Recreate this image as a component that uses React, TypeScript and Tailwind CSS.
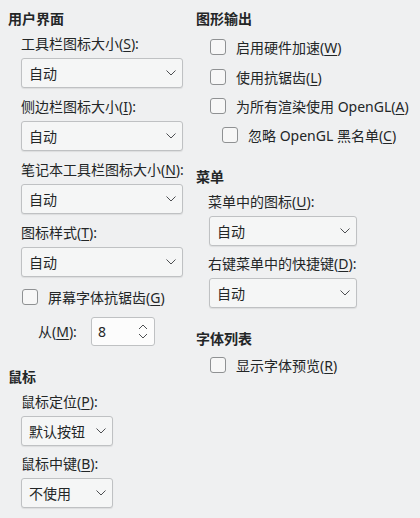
import React from "react";

const Chevron = () => (
  <svg width="10" height="6" viewBox="0 0 10 6" className="shrink-0">
    <path d="M0.5 0.5 L5 5 L9.5 0.5" fill="none" stroke="#4d4f52" strokeWidth="1" />
  </svg>
);

const M = ({ c }: { c: string }) => <span className="underline underline-offset-2">{c}</span>;

const Label = ({ text, m, className = "" }: { text: string; m: string; className?: string }) => (
  <div className={`h-[20px] flex items-center leading-[20px] ${className}`}>
    {text}(<M c={m} />):
  </div>
);

const Combo = ({ value, w, className = "" }: { value: string; w: string; className?: string }) => (
  <div
    className={`h-[30px] ${w} flex items-center justify-between pl-[7px] pr-[6px] rounded-[3px] border border-[#bfc1c3] bg-[#f5f6f6] shadow-[0_1px_1px_rgba(0,0,0,0.08)] ${className}`}
  >
    <span>{value}</span>
    <Chevron />
  </div>
);

const Check = ({ text, m, className = "" }: { text: string; m: string; className?: string }) => (
  <div className={`h-[20px] flex items-center ${className}`}>
    <div className="w-[16px] h-[16px] rounded-[3px] border border-[#8f9193] bg-[#f7f7f7] shrink-0" />
    <span className="ml-[10px]">
      {text}(<M c={m} />)
    </span>
  </div>
);

const Heading = ({ text, className = "" }: { text: string; className?: string }) => (
  <div className={`h-[20px] flex items-center font-bold ${className}`}>{text}</div>
);

export default function App() {
  return (
    <div
      className="w-[420px] h-[518px] bg-[#eff0f1] text-[#232627] text-[14px] flex overflow-hidden"
      style={{ fontFamily: '"Noto Sans", "Noto Sans CJK SC", sans-serif' }}
    >
      {/* Left column */}
      <div className="w-[188px] pl-[8px] pt-[8px] flex flex-col">
        <Heading text="用户界面" />
        <div className="pl-[13px] flex flex-col">
          <Label text="工具栏图标大小" m="S" className="mt-[6px]" />
          <Combo value="自动" w="w-[162px]" className="mt-[4px]" />
          <Label text="侧边栏图标大小" m="I" className="mt-[9px]" />
          <Combo value="自动" w="w-[162px]" className="mt-[4px]" />
          <Label text="笔记本工具栏图标大小" m="N" className="mt-[9px]" />
          <Combo value="自动" w="w-[162px]" className="mt-[4px]" />
          <Label text="图标样式" m="T" className="mt-[9px]" />
          <Combo value="自动" w="w-[162px]" className="mt-[4px]" />
          <Check text="屏幕字体抗锯齿" m="G" className="mt-[10px] pl-[1px]" />
          <div className="mt-[10px] flex items-center">
            <div className="pl-[17px] w-[70px]">
              从(<M c="M" />):
            </div>
            <div className="h-[29px] w-[64px] flex items-center justify-between pl-[6px] pr-[6px] rounded-[3px] border border-[#bfc1c3] bg-[#fcfcfc]">
              <span>8</span>
              <svg width="10" height="16" viewBox="0 0 10 16">
                <path d="M1 5 L5 1 L9 5" fill="none" stroke="#4d4f52" strokeWidth="1" />
                <path d="M1 10 L5 14 L9 10" fill="none" stroke="#4d4f52" strokeWidth="1" />
              </svg>
            </div>
          </div>
        </div>
        <Heading text="鼠标" className="mt-[20px]" />
        <div className="pl-[13px] flex flex-col">
          <Label text="鼠标定位" m="P" className="mt-[6px]" />
          <Combo value="默认按钮" w="w-[92px]" className="mt-[4px]" />
          <Label text="鼠标中键" m="B" className="mt-[8px]" />
          <Combo value="不使用" w="w-[92px]" className="mt-[4px]" />
        </div>
      </div>

      {/* Right column */}
      <div className="pl-[8px] pt-[8px] flex flex-col">
        <Heading text="图形输出" />
        <div className="pl-[14px] flex flex-col">
          <Check text="启用硬件加速" m="W" className="mt-[9px]" />
          <Check text="使用抗锯齿" m="L" className="mt-[10px]" />
          <Check text="为所有渲染使用 OpenGL" m="A" className="mt-[9px]" />
          <Check text="忽略 OpenGL 黑名单" m="C" className="mt-[9px] pl-[12px]" />
        </div>
        <Heading text="菜单" className="mt-[21px]" />
        <div className="pl-[12px] flex flex-col">
          <Label text="菜单中的图标" m="U" className="mt-[6px]" />
          <Combo value="自动" w="w-[148px]" className="mt-[4px] ml-[1px]" />
          <Label text="右键菜单中的快捷键" m="D" className="mt-[8px]" />
          <Combo value="自动" w="w-[148px]" className="mt-[4px] ml-[1px]" />
        </div>
        <Heading text="字体列表" className="mt-[20px]" />
        <div className="pl-[14px] flex flex-col">
          <Check text="显示字体预览" m="R" className="mt-[7px]" />
        </div>
      </div>
    </div>
  );
}
